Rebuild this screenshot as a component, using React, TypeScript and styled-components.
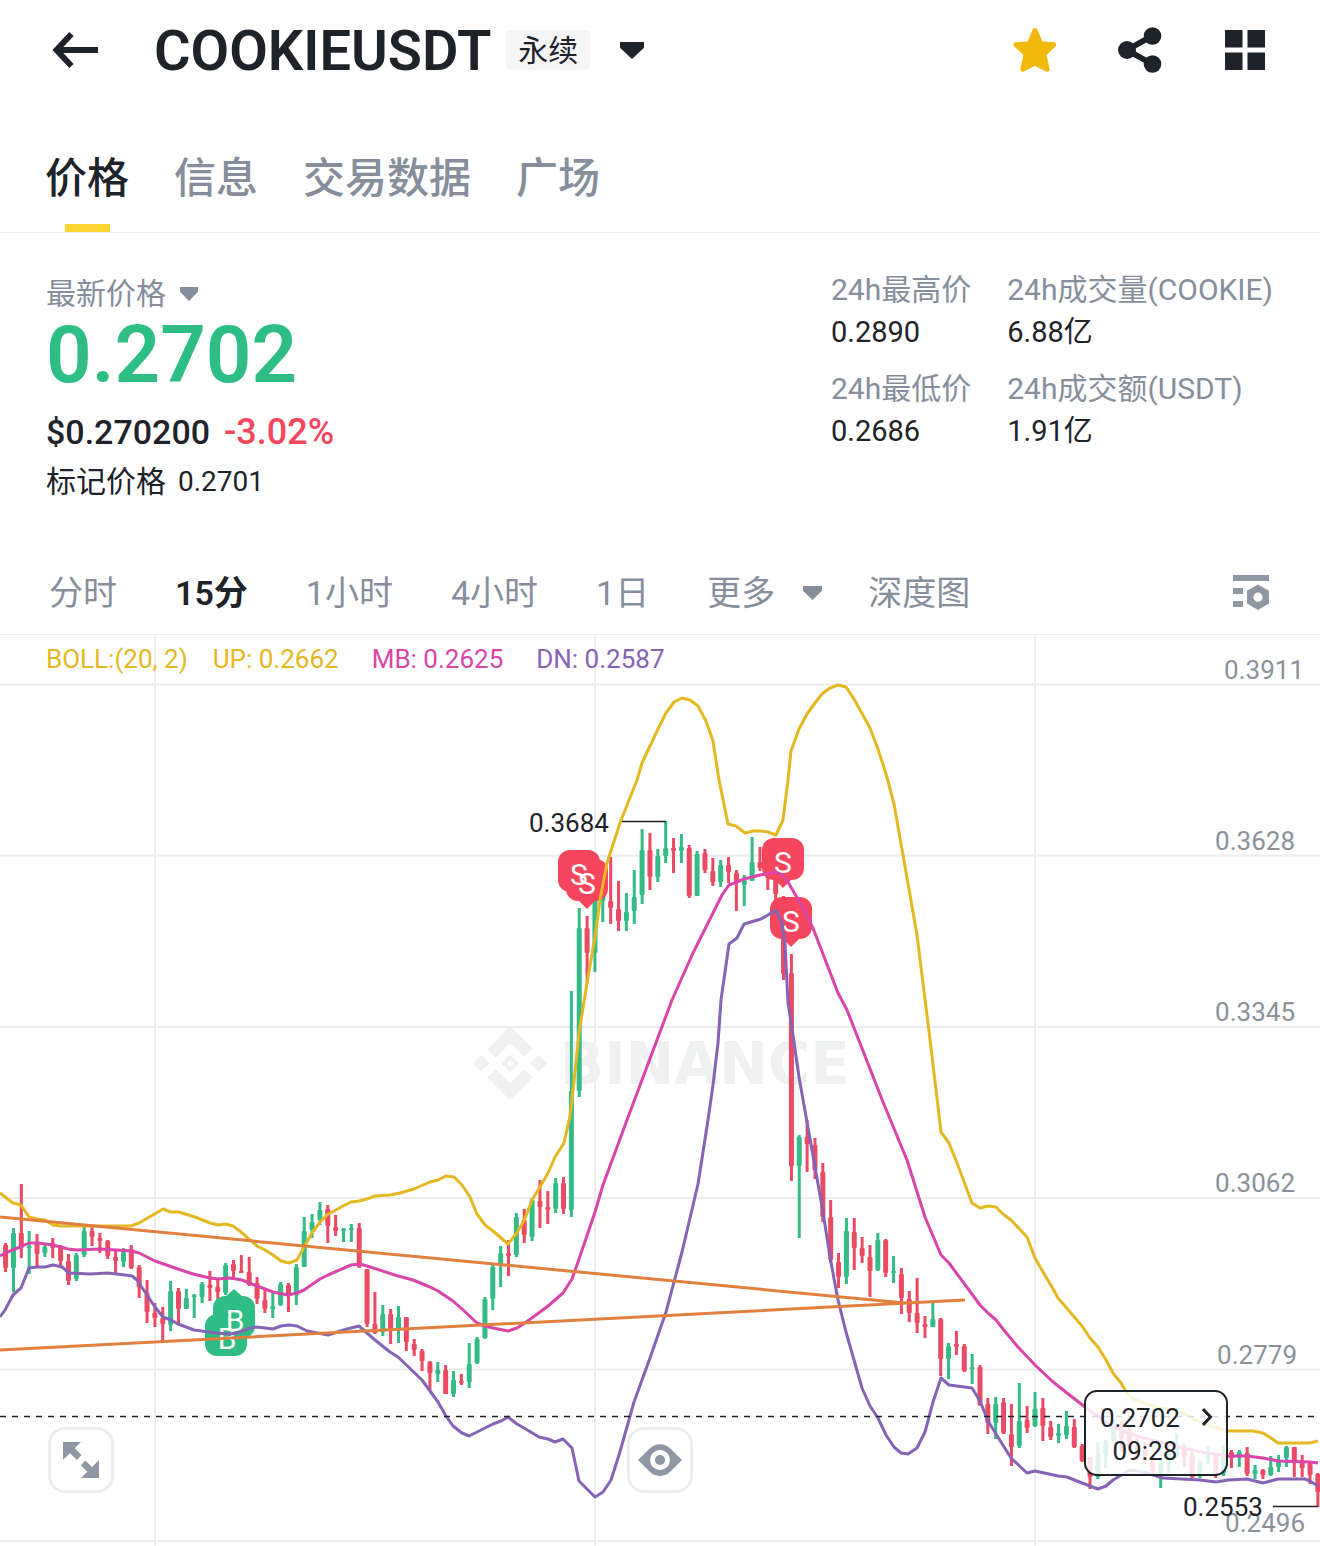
import React, { useState } from "react";
import styled, { createGlobalStyle, css } from "styled-components";

const color = {
  ink: "#1e2329",
  grey: "#868e9b",
  axis: "#8b9199",
  line: "#eaecef",
  grid: "#ededef",
  green: "#2ebd85",
  red: "#f6465d",
  yellow: "#fcd535",
  gold: "#f0b90b",
  up: "#e4b822",
  mid: "#d945a8",
  low: "#8563b5",
  trend: "#e0803c",
};

const GlobalStyle = createGlobalStyle`
  *, *::before, *::after { box-sizing: border-box; }
  body {
    margin: 0;
    background: #fff;
    color: ${color.ink};
    font-family: Roboto, "Noto Sans CJK SC", sans-serif;
  }
  button { font: inherit; color: inherit; background: none; border: 0; padding: 0; margin: 0; cursor: pointer; }
  h1, p, dl, dd { margin: 0; }
  svg { display: block; }
`;

const Page = styled.main`
  width: 100%;
  overflow: hidden;
`;

const Header = styled.header`
  display: flex;
  align-items: center;
  height: 100px;
  padding: 0 54px 0 52px;
`;

const IconButton = styled.button`
  display: flex;
  align-items: center;
  justify-content: center;
`;

const Title = styled.h1`
  margin-left: 56px;
  padding-top: 2px;
  font-size: 56px;
  line-height: 64px;
  font-weight: 600;
`;

const Badge = styled.span`
  margin: 0 30px 0 15px;
  padding: 2px 12px 0;
  border-radius: 5px;
  background: #f5f5f5;
  font-size: 30px;
  line-height: 38px;
`;

const HeaderActions = styled.div`
  display: flex;
  align-items: center;
  gap: 62px;
  margin-left: auto;
`;

const Tabs = styled.nav`
  display: flex;
  gap: 45px;
  height: 133px;
  padding: 49px 45px 0;
  border-bottom: 1px solid ${color.line};
`;

const Tab = styled.button<{ $active: boolean }>`
  display: flex;
  flex-direction: column;
  align-items: center;
  gap: 15px;
  font-size: 42px;
  line-height: 60px;
  font-weight: 500;
  color: ${(p) => (p.$active ? color.ink : color.grey)};

  &::after {
    content: "";
    width: 45px;
    height: 8px;
    background: ${(p) => (p.$active ? color.yellow : "transparent")};
  }
`;

const Summary = styled.section`
  display: flex;
  justify-content: space-between;
  align-items: flex-start;
  padding: 36px 47px 48px 46px;
`;

const PriceBlock = styled.div`
  display: flex;
  flex-direction: column;
  align-items: flex-start;
  padding-top: 7px;
`;

const PriceKind = styled.button`
  display: flex;
  align-items: center;
  gap: 14px;
  font-size: 30px;
  line-height: 36px;
  color: ${color.grey};
`;

const LastPrice = styled.p`
  margin: 1px 0 13px;
  font-size: 80px;
  line-height: 84px;
  font-weight: 600;
  color: ${color.green};
`;

const FiatLine = styled.p`
  display: flex;
  gap: 14px;
  font-size: 34px;
  line-height: 44px;
  font-weight: 500;
`;

const Change = styled.span`
  font-size: 36px;
  color: ${color.red};
`;

const MarkLine = styled.p`
  display: flex;
  gap: 12px;
  margin-top: 8px;
  font-size: 30px;
  line-height: 40px;
`;

const Figure = styled.span`
  font-size: 28px;
`;

const Stats = styled.dl`
  display: grid;
  grid-template-columns: auto auto;
  gap: 15px 36px;
`;

const StatLabel = styled.dt`
  font-size: 30px;
  line-height: 42px;
  color: ${color.grey};
`;

const StatValue = styled.dd`
  font-size: 29px;
  line-height: 42px;
`;

const Intervals = styled.nav`
  display: flex;
  align-items: center;
  gap: 58px;
  height: 85px;
  padding: 2px 51px 0 49px;
  border-bottom: 1px solid ${color.line};
`;

const Interval = styled.button<{ $active?: boolean; $caret?: boolean }>`
  display: flex;
  align-items: center;
  gap: 28px;
  font-size: 34px;
  line-height: 50px;
  color: ${color.grey};
  ${(p) => p.$active && css`color: ${color.ink}; font-weight: 600;`}
  ${(p) => p.$caret && css`margin-right: -12px;`}
`;

const SettingsButton = styled(IconButton)`
  margin-left: auto;
`;

const ChartArea = styled.section`
  position: relative;
`;

const Plot = styled.svg`
  width: 100%;
  height: auto;
  font-family: Roboto, sans-serif;
  font-size: 26px;
`;

const Legend = styled.div`
  position: absolute;
  top: 8px;
  left: 46px;
  display: flex;
  font-size: 26px;
  line-height: 32px;
`;

const LegendItem = styled.span<{ $tone: string; $gap?: number }>`
  margin-right: ${(p) => p.$gap ?? 33}px;
  color: ${(p) => p.$tone};
`;

const ToolButton = styled(IconButton)<{ $centered?: boolean }>`
  position: absolute;
  bottom: 53px;
  left: ${(p) => (p.$centered ? "50%" : "48px")};
  width: 66px;
  height: 66px;
  border: 3px solid ${color.line};
  border-radius: 17px;
  background: #fff;
  ${(p) => p.$centered && css`transform: translateX(-50%);`}
`;

const PriceTag = styled.button`
  position: absolute;
  right: 92px;
  bottom: 70px;
  display: flex;
  align-items: flex-start;
  justify-content: space-between;
  width: 144px;
  height: 86px;
  padding: 10px 10px 0 14px;
  border: 2px solid ${color.ink};
  border-radius: 13px;
  background: rgba(255, 255, 255, 0.84);
  font-size: 26px;
  line-height: 33px;
  text-align: center;
`;

const TagLines = styled.span`
  display: flex;
  flex-direction: column;
`;

const TagTime = styled.span`
  padding-left: 10px;
`;

const TagChevron = styled.svg`
  margin-top: 5px;
`;

/* Candle columns: high, body top, body bottom, low, rising (1) or falling (0). */
type Candle = [number, number, number, number, 0 | 1];
const candles: Candle[] = [
  [1243,1245,1268,1272,0],[1228,1233,1268,1292,1],[1184,1233,1248,1258,0],[1231,1246,1248,1274,1],
  [1234,1243,1254,1266,0],[1244,1247,1253,1257,1],[1238,1243,1248,1258,0],[1245,1247,1261,1267,0],
  [1254,1261,1281,1285,0],[1253,1255,1279,1281,1],[1227,1231,1255,1257,1],[1226,1231,1237,1246,0],
  [1233,1238,1241,1253,0],[1240,1241,1256,1259,0],[1250,1257,1261,1274,0],[1248,1252,1262,1267,1],
  [1245,1249,1268,1269,0],[1265,1267,1287,1298,0],[1280,1293,1312,1323,0],[1303,1313,1318,1327,0],
  [1307,1318,1324,1341,0],[1281,1291,1325,1331,1],[1288,1291,1309,1323,0],[1289,1298,1309,1309,1],
  [1294,1295,1297,1318,1],[1282,1284,1297,1303,1],[1271,1285,1288,1301,0],[1278,1287,1292,1303,0],
  [1263,1265,1293,1295,1],[1260,1264,1271,1279,0],[1255,1271,1273,1273,0],[1257,1272,1285,1286,0],
  [1277,1283,1299,1304,0],[1290,1300,1309,1313,0],[1293,1306,1309,1318,1],[1282,1284,1305,1306,1],
  [1283,1285,1296,1312,0],[1264,1267,1295,1305,1],[1217,1231,1267,1267,1],[1214,1222,1230,1238,1],
  [1202,1210,1220,1225,1],[1205,1209,1226,1243,0],[1215,1227,1231,1236,0],[1228,1229,1231,1242,1],
  [1224,1228,1230,1242,1],[1223,1228,1267,1268,0],[1269,1269,1324,1327,0],[1292,1324,1333,1334,0],
  [1305,1314,1332,1336,1],[1309,1314,1331,1344,0],[1306,1317,1329,1343,1],[1317,1317,1342,1351,0],
  [1339,1344,1350,1356,0],[1349,1351,1361,1371,0],[1361,1362,1373,1390,0],[1362,1370,1374,1382,1],
  [1365,1370,1394,1394,0],[1371,1380,1394,1397,1],[1374,1381,1383,1385,0],[1343,1364,1382,1388,1],
  [1337,1339,1363,1364,1],[1297,1299,1338,1339,1],[1265,1267,1299,1310,1],[1246,1253,1266,1287,1],
  [1240,1253,1256,1276,0],[1213,1217,1255,1257,1],[1209,1220,1235,1243,0],[1198,1200,1237,1241,1],
  [1180,1201,1207,1228,0],[1191,1207,1210,1224,0],[1178,1183,1209,1213,1],[1177,1183,1209,1214,0],
  [991,1091,1210,1217,1],[908,928,1091,1097,1],[916,928,953,983,0],[890,897,953,972,1],
  [877,880,901,922,1],[857,901,908,924,0],[881,909,921,931,0],[893,912,921,931,1],
  [870,897,911,924,1],[829,850,895,904,1],[833,850,877,890,0],[849,856,877,882,1],
  [821,848,856,863,1],[838,848,851,873,0],[834,847,851,863,1],[845,848,896,898,0],
  [851,854,896,896,1],[849,853,870,873,0],[858,871,882,886,0],[860,865,882,887,1],
  [857,865,872,883,0],[870,873,883,911,0],[875,880,885,906,1],[837,862,881,881,1],
  [847,862,868,871,0],[855,868,878,890,0],[870,875,894,900,0],[896,900,974,980,0],
  [954,973,1166,1181,0],[1135,1137,1166,1238,1],[1120,1137,1144,1172,0],[1138,1145,1170,1179,0],
  [1163,1172,1217,1222,0],[1200,1217,1260,1263,0],[1253,1262,1277,1288,0],[1218,1231,1277,1284,1],
  [1218,1232,1248,1270,0],[1237,1248,1256,1263,0],[1245,1257,1271,1297,0],[1233,1240,1270,1271,1],
  [1239,1240,1273,1277,0],[1256,1271,1273,1283,1],[1268,1274,1298,1314,0],[1291,1299,1313,1322,0],
  [1278,1313,1323,1333,0],[1316,1324,1327,1338,0],[1302,1319,1327,1327,1],[1318,1319,1359,1376,0],
  [1343,1346,1359,1379,1],[1331,1344,1347,1355,0],[1344,1346,1371,1372,0],[1354,1367,1369,1384,1],
  [1365,1367,1405,1406,0],[1398,1404,1423,1434,0],[1397,1404,1423,1439,1],[1398,1402,1433,1434,0],
  [1404,1434,1447,1466,0],[1383,1421,1446,1448,1],[1406,1420,1428,1433,0],[1392,1409,1426,1427,1],
  [1398,1408,1426,1441,0],[1421,1427,1437,1440,0],[1424,1433,1436,1443,1],[1411,1426,1435,1439,1],
  [1419,1427,1447,1448,0],[1444,1446,1461,1462,0],[1457,1457,1477,1489,0],[1442,1454,1477,1479,1],
  [1440,1441,1455,1468,1],[1420,1428,1441,1441,1],[1421,1429,1438,1452,0],[1427,1430,1447,1450,0],
  [1438,1445,1453,1460,0],[1442,1450,1460,1464,0],[1455,1462,1471,1473,0],[1460,1463,1473,1488,1],
  [1445,1453,1463,1473,1],[1433,1445,1457,1458,1],[1444,1447,1457,1467,0],[1452,1455,1477,1478,0],
  [1460,1462,1475,1478,1],[1446,1455,1458,1464,1],[1455,1456,1475,1478,0],[1445,1457,1473,1476,1],
  [1450,1452,1458,1468,0],[1450,1452,1458,1467,1],[1447,1453,1474,1476,0],[1465,1470,1474,1479,1],
  [1469,1470,1475,1479,0],[1456,1467,1475,1476,1],[1455,1460,1467,1472,1],[1446,1447,1458,1467,1],
  [1447,1447,1462,1477,0],[1455,1462,1468,1477,0],[1462,1463,1475,1484,0],[1473,1474,1492,1507,0],
];

const upperBand =
  "0,1193 13,1203 21,1205 29,1217 37,1219 45,1220 53,1225 61,1226 84,1226 100,1226 131,1226 139,1223 163,1209 171,1212 179,1212 195,1217 210,1223 218,1225 226,1224 233,1226 241,1232 257,1246 265,1250 273,1255 281,1261 289,1263 297,1260 304,1247 312,1233 320,1222 328,1214 336,1210 343,1206 351,1202 359,1201 367,1199 375,1196 390,1195 400,1193 414,1189 430,1182 438,1180 446,1176 454,1177 462,1185 470,1197 477,1214 485,1225 493,1231 501,1238 508,1244 516,1234 524,1221 532,1200 540,1187 548,1173 555,1157 564,1143 570,1116 575,1072 579,1033 587,983 595,937 600,900 607,863 620,823 637,780 642,763 658,729 666,713 674,702 682,698 690,700 698,706 706,721 713,741 719,780 728,824 736,826 745,833 753,831 761,831 768,832 776,835 783,820 788,780 791,751 799,729 807,714 815,703 822,694 830,688 838,685 846,687 854,699 870,728 878,749 886,774 894,804 903,855 917,935 929,1031 941,1132 949,1143 957,1163 972,1203 980,1208 988,1206 996,1207 1003,1214 1011,1220 1027,1237 1035,1258 1043,1272 1052,1287 1058,1298 1082,1326 1090,1338 1098,1347 1106,1360 1113,1373 1121,1383 1127,1393 1133,1399 1147,1404 1160,1408 1173,1410 1183,1413 1193,1419 1210,1426 1227,1431 1253,1431 1263,1433 1271,1438 1278,1443 1310,1443 1318,1441";

const middleBand =
  "0,1256 10,1251 20,1247 29,1243 38,1243 53,1245 68,1249 77,1250 100,1249 132,1251 139,1253 155,1261 178,1269 193,1274 210,1278 218,1279 230,1278 242,1280 257,1286 273,1292 288,1295 297,1293 304,1290 320,1279 328,1275 351,1265 360,1264 367,1266 398,1276 413,1280 430,1287 438,1291 453,1301 462,1309 477,1323 485,1326 493,1328 508,1331 517,1328 525,1323 540,1312 548,1306 563,1293 572,1279 577,1265 595,1212 603,1185 627,1120 672,1000 693,953 722,895 729,885 737,882 744,879 760,875 776,872 782,875 788,882 803,908 813,928 838,993 847,1010 883,1102 907,1160 925,1217 941,1255 949,1263 980,1305 988,1313 996,1320 1003,1329 1018,1347 1035,1365 1052,1381 1067,1393 1085,1407 1107,1423 1120,1430 1140,1437 1167,1444 1183,1448 1207,1453 1227,1456 1247,1456 1263,1458 1278,1461 1310,1462 1318,1463";

const lowerBand =
  "0,1317 5,1310 13,1295 21,1288 29,1268 37,1267 45,1267 53,1265 62,1267 69,1273 90,1274 108,1273 125,1275 132,1276 137,1280 147,1295 155,1307 163,1317 171,1320 178,1324 194,1330 217,1333 230,1334 237,1333 250,1328 257,1327 273,1329 281,1326 289,1325 297,1326 307,1331 328,1335 347,1329 359,1326 367,1333 375,1340 390,1352 398,1357 422,1380 430,1391 438,1402 446,1416 453,1426 462,1433 469,1436 477,1432 493,1424 501,1421 508,1417 517,1424 524,1428 539,1437 548,1439 555,1442 563,1439 572,1448 579,1481 587,1489 595,1497 603,1492 611,1480 619,1455 627,1427 634,1402 650,1358 666,1312 682,1252 698,1184 708,1120 713,1085 718,1043 721,1000 729,944 737,938 744,924 761,919 768,915 776,910 782,923 785,943 788,1003 792,1028 799,1077 815,1167 823,1212 830,1257 838,1300 846,1332 854,1360 862,1388 870,1406 878,1418 886,1435 894,1447 901,1453 908,1454 917,1448 925,1432 933,1402 941,1378 949,1385 972,1388 980,1401 988,1421 996,1434 1011,1458 1027,1473 1035,1471 1058,1476 1067,1477 1082,1483 1098,1489 1106,1486 1113,1480 1130,1470 1143,1472 1163,1478 1200,1480 1216,1482 1228,1480 1247,1479 1263,1483 1278,1479 1305,1479 1310,1481 1318,1486";

const axisLabels = [
  { text: "0.3911", x: 1304, y: 679, line: 684.5 },
  { text: "0.3628", x: 1295, y: 850, line: 855.5 },
  { text: "0.3345", x: 1295, y: 1021, line: 1027 },
  { text: "0.3062", x: 1295, y: 1192, line: 1198 },
  { text: "0.2779", x: 1297, y: 1364, line: 1369.5 },
  { text: "0.2496", x: 1305, y: 1532, line: 1541 },
];

const trades = [
  { side: "S", x: 579, y: 871, pointer: false },
  { side: "S", x: 587, y: 880, pointer: true },
  { side: "S", x: 783, y: 859, pointer: true },
  { side: "S", x: 791, y: 918, pointer: true },
  { side: "B", x: 226, y: 1335, pointer: false },
  { side: "B", x: 234, y: 1317, pointer: true },
];

const CandleMarks = () => (
  <g>
    {candles.map(([high, top, bottom, low, rising], i) => {
      const x = 5.6 + i * 7.858;
      const fill = rising ? "#34bb86" : "#ea4b62";
      return (
        <g key={i} fill={fill}>
          <rect x={x - 1.5} y={high} width={3} height={low - high} />
          <rect x={x - 2.5} y={top} width={5} height={Math.max(2, bottom - top)} rx={1} />
        </g>
      );
    })}
  </g>
);

const TradeMarks = () => (
  <g>
    {trades.map((t, i) => {
      const down = t.side === "S";
      return (
        <g key={i} fill={down ? color.red : color.green}>
          <rect x={t.x - 21} y={t.y - 21} width={42} height={42} rx={12} />
          {t.pointer && (
            <path
              d={down ? `M${t.x - 9} ${t.y + 20}h18l-9 9z` : `M${t.x - 9} ${t.y - 20}h18l-9 -8z`}
            />
          )}
        </g>
      );
    })}
    {trades.map((t, i) => (
      <text key={i} x={t.side === "S" ? t.x : t.x + 1} y={t.y + 14} fontSize={30} textAnchor="middle" fill="#fff">
        {t.side}
      </text>
    ))}
  </g>
);

const Watermark = () => (
  <g fill="#eff0f0">
    <path d="M510 1026l22.500 22.500-8.300 8.300L510 1043l-14.200 14.800-8.300-8.300z" />
    <path d="M510 1100l22.500-22.500-8.300-8.300L510 1083l-14.200-13.800-8.300 8.300z" />
    <path d="M481.300 1055l8.300 8.300-8.300 8.300-8.300-8.300zM538.700 1055l8.300 8.300-8.300 8.300-8.300-8.300z" />
    <path fillRule="evenodd" d="M510 1054.500l8.800 8.800-8.800 8.800-8.800-8.800zM510 1060l-3.300 3.300 3.300 3.300 3.300-3.300z" />
    <text x={560} y={1084} fontFamily='"DejaVu Sans", sans-serif' fontWeight={700} fontSize={58}>
      BINANCE
    </text>
  </g>
);

const Chart = () => (
  <Plot viewBox="0 635 1320 911" role="img" aria-label="COOKIEUSDT 15分">
    <g stroke={color.grid} strokeWidth={2}>
      {axisLabels.map((a) => (
        <line key={a.text} x1={0} x2={1320} y1={a.line} y2={a.line} />
      ))}
      {[155, 595, 1035].map((x) => (
        <line key={x} x1={x} x2={x} y1={635} y2={1546} />
      ))}
    </g>
    <Watermark />
    <g fill={color.axis} textAnchor="end">
      {axisLabels.map((a) => (
        <text key={a.text} x={a.x} y={a.y}>{a.text}</text>
      ))}
    </g>
    <CandleMarks />
    <TradeMarks />
    <g fill="none" strokeWidth={3} strokeLinejoin="round">
      <polyline points={upperBand} stroke={color.up} />
      <polyline points={middleBand} stroke={color.mid} />
      <polyline points={lowerBand} stroke={color.low} />
      <path d="M0 1217L905 1303M0 1350L965 1300" stroke={color.trend} />
    </g>
    <line x1={0} x2={1320} y1={1416.5} y2={1416.5} stroke={color.ink} strokeWidth={1.5} strokeDasharray="6 6" />
    <path d="M622 821.500H666M1273 1506.500H1318" stroke={color.ink} strokeWidth={1.5} />
    <g fill={color.ink}>
      <text x={529} y={832}>0.3684</text>
      <text x={1183} y={1516}>0.2553</text>
    </g>
  </Plot>
);

const Caret = ({ width, height }: { width: number; height: number }) => (
  <svg width={width} height={height} viewBox="0 0 24 18" preserveAspectRatio="none" fill="currentColor" aria-hidden="true">
    <path d="M0 0h24v6L12 18 0 6z" />
  </svg>
);

const tabs = ["价格", "信息", "交易数据", "广场"];
const intervals = ["分时", "15分", "1小时", "4小时", "1日"];

const stats = [
  ["24h最高价", "0.2890"],
  ["24h成交量(COOKIE)", "6.88亿"],
  ["24h最低价", "0.2686"],
  ["24h成交额(USDT)", "1.91亿"],
];

export default function App() {
  const [tab, setTab] = useState("价格");
  const [interval, setInterval] = useState("15分");

  return (
    <Page>
      <GlobalStyle />
      <Header>
        <IconButton aria-label="返回">
          <svg width="46" height="36" viewBox="0 0 46 36" fill="none" stroke={color.ink} strokeWidth="6">
            <path d="M46 18H5M19.500 2L4.500 18l15 16" />
          </svg>
        </IconButton>
        <Title>COOKIEUSDT</Title>
        <Badge>永续</Badge>
        <IconButton aria-label="切换合约">
          <Caret width={24} height={17} />
        </IconButton>
        <HeaderActions>
          <IconButton aria-label="收藏">
            <svg width="44" height="46" viewBox="0 0 44 46" fill={color.gold} stroke={color.gold} strokeWidth="5" strokeLinejoin="round">
              <path d="M23 3.500l5.600 13.200 13 1-9.800 9.500 3.400 15L23 36l-12.200 6.200 3.400-15L4 17.700l13.400-1z" />
            </svg>
          </IconButton>
          <IconButton aria-label="分享">
            <svg width="44" height="46" viewBox="0 0 44 46" fill={color.ink}>
              <path d="M34 9L9 23l25 14" fill="none" stroke={color.ink} strokeWidth="6" />
              <circle cx="9" cy="23" r="9" />
              <circle cx="34.500" cy="9" r="8.800" />
              <circle cx="34.500" cy="37" r="8.800" />
            </svg>
          </IconButton>
          <IconButton aria-label="更多功能">
            <svg width="42" height="40" viewBox="0 0 42 40" fill={color.ink}>
              <path d="M1 0h17.500v17.500H1zM23.500 0H41v17.500H23.500zM1 22.500h17.500V40H1zM23.500 22.500H41V40H23.500z" />
            </svg>
          </IconButton>
        </HeaderActions>
      </Header>

      <Tabs>
        {tabs.map((name) => (
          <Tab key={name} $active={name === tab} onClick={() => setTab(name)}>{name}</Tab>
        ))}
      </Tabs>

      <Summary>
        <PriceBlock>
          <PriceKind>
            最新价格
            <Caret width={18} height={14} />
          </PriceKind>
          <LastPrice>0.2702</LastPrice>
          <FiatLine>
            <span>$0.270200</span>
            <Change>-3.02%</Change>
          </FiatLine>
          <MarkLine>
            <span>标记价格</span>
            <Figure>0.2701</Figure>
          </MarkLine>
        </PriceBlock>
        <Stats>
          {stats.map(([label, value]) => (
            <div key={label}>
              <StatLabel>{label}</StatLabel>
              <StatValue>{value}</StatValue>
            </div>
          ))}
        </Stats>
      </Summary>

      <Intervals>
        {intervals.map((name) => (
          <Interval key={name} $active={name === interval} onClick={() => setInterval(name)}>{name}</Interval>
        ))}
        <Interval $caret>
          更多
          <Caret width={19} height={14} />
        </Interval>
        <Interval>深度图</Interval>
        <SettingsButton aria-label="图表设置">
          <svg width="36" height="36" viewBox="0 0 36 36" fill="#8f97a3">
            <path d="M0 0h36v6H0zM0 13h10v6H0zM0 26h10v6H0z" />
            <path fillRule="evenodd" d="M25 9.500l11 6.300v12.800l-11 6.300-11-6.300V15.800zM25 17.600a4.600 4.600 0 100 9.200 4.600 4.600 0 000-9.200z" />
          </svg>
        </SettingsButton>
      </Intervals>

      <ChartArea>
        <Chart />
        <Legend>
          <LegendItem $tone={color.up} $gap={25}>BOLL:(20, 2)</LegendItem>
          <LegendItem $tone={color.up}>UP: 0.2662</LegendItem>
          <LegendItem $tone={color.mid}>MB: 0.2625</LegendItem>
          <LegendItem $tone={color.low}>DN: 0.2587</LegendItem>
        </Legend>
        <ToolButton aria-label="全屏">
          <svg width="36" height="36" viewBox="0 0 36 36" fill="#8f97a3">
            <path d="M0 0h18l-6.300 6.300 6.800 6.800-4.500 5-7-6.900L0 17.700zM36 36H18l6.300-6.300-6.400-6.400 4.300-4.700 6.800 6.300L36 18z" />
          </svg>
        </ToolButton>
        <ToolButton $centered aria-label="显示">
          <svg width="44" height="34" viewBox="0 0 44 34" fill="#8f97a3">
            <path fillRule="evenodd" d="M0 17L11 6C17 -0.500 27 -0.500 33 6L44 17 33 28C27 34.500 17 34.500 11 28zM22 7a10 10 0 100 20 10 10 0 000-20z" />
            <circle cx="22" cy="17" r="5" />
          </svg>
        </ToolButton>
        <PriceTag>
          <TagLines>
            <span>0.2702</span>
            <TagTime>09:28</TagTime>
          </TagLines>
          <TagChevron width="14" height="20" viewBox="0 0 14 20" fill="none" stroke={color.ink} strokeWidth="3">
            <path d="M1 2l7.500 8L1 18" />
          </TagChevron>
        </PriceTag>
      </ChartArea>
    </Page>
  );
}
